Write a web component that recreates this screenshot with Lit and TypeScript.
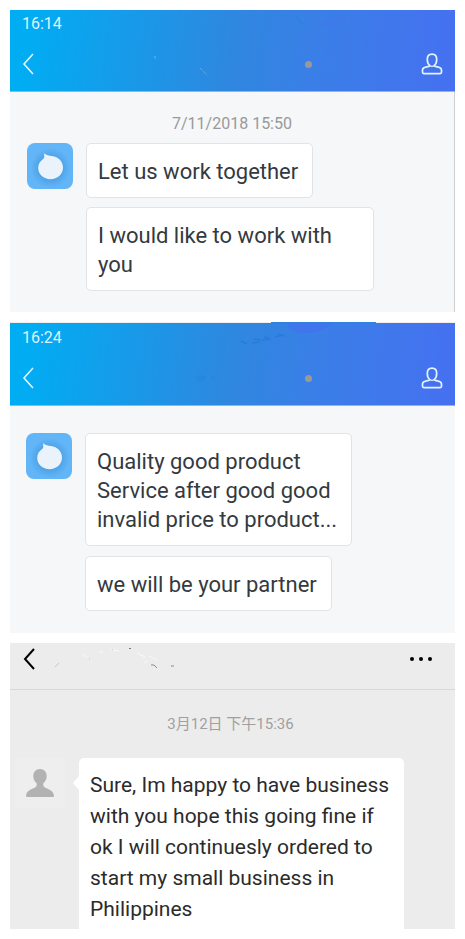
import { LitElement, html, svg, css } from "lit";
import { customElement, property } from "lit/decorators.js";

const chevron = svg`<path d="M11 1 L2 11 L11 21" fill="none" stroke="currentColor"/>`;

@customElement("chat-header")
class ChatHeader extends LitElement {
  @property() time = "";
  @property() variant = "first";

  static styles = css`
    :host { display: block; }
    .bar {
      position: relative;
      display: flex;
      flex-direction: column;
      box-sizing: border-box;
      padding: 5px 12px 6px;
      color: #fff;
      background: linear-gradient(97deg, #00adf3 4%, #2f87df 50%, #3b7ee8 70%, #4571f0 98%) padding-box;
      border-bottom: 1px solid #80b9f5;
    }
    .second { padding: 6px 12px; border-top: 1px solid #f1eeee; }
    .time { font-size: 16px; line-height: 18px; color: #dff2fd; }
    .nav { display: flex; justify-content: space-between; align-items: center; margin-top: 20px; padding-bottom: 10px; }
    button { display: flex; padding: 0; border: 0; background: none; color: #e4f4fe; cursor: pointer; }
    .back { stroke-width: 1.6; }
    .spacer { display: grid; flex: 1; grid-template-columns: 70fr 30fr; align-items: center; }
    .dot { grid-column: 2; width: 7px; height: 7px; border-radius: 50%; background: #999; }
    .marks { position: absolute; top: -1px; left: 0; width: 100%; height: 82px; pointer-events: none; }
  `;

  private marks() {
    return this.variant === "first"
      ? svg`
        <path d="M190 59 L197 66" stroke="#75b9f0" stroke-width="1" stroke-dasharray="1 1"/>
        <path d="M144 47 l2 3 M144 49 l2 -2" stroke="#52abe9" stroke-width="1"/>
        <path d="M286 8 L293 15" stroke="#2f82da" stroke-width="2"/>
        <path d="M312 13 q10 -7 24 -6 l-5 8 q-10 4 -18 1 z" fill="#4277ec" opacity=".5"/>`
      : svg`
        <path d="M261 0 H366 V2 H261 Z" fill="#2f83df"/>
        <path d="M277 1 H326 Q310 11 292 11 Q280 10 277 1 Z" fill="#4372ef" opacity=".8"/>
        <path d="M231 19 l6 3 M242 21 l8 -1 M244 17 l6 1 M252 18 l9 -1 M254 15 l5 1 M265 15 l8 -2 M268 12 l7 2" stroke="#237bd9" stroke-width="1.5" fill="none" opacity=".8"/>
        <path d="M185 56 q6 -4 10 0 q-4 4 -9 1 M201 54 l4 3" stroke="#2786dd" stroke-width="2" fill="#2786dd" opacity=".5"/>`;
  }

  render() {
    return html`
      <header class="bar ${this.variant}">
        <svg class="marks" aria-hidden="true">${this.marks()}</svg>
        <span class="time">${this.time}</span>
        <div class="nav">
          <button class="back" aria-label="Back"><svg width="12" height="22">${chevron}</svg></button>
          <span class="spacer"><i class="dot"></i></span>
          <button aria-label="Profile">
            <svg width="22" height="22" fill="none" stroke="currentColor" stroke-width="1.7">
              <path d="M11 1.2 C7.6 1.2 6.3 3.6 6.3 6.5 C6.3 9.4 7.2 11.4 8.8 12.6 C8.6 13.3 7.8 13.4 6.6 13.7 C3.2 14.3 1.5 15 1.5 17 V19.3 Q1.5 20.6 2.8 20.6 H19.2 Q20.5 20.6 20.5 19.3 V17 C20.5 15 18.8 14.3 15.4 13.7 C14.2 13.4 13.4 13.3 13.2 12.6 C14.8 11.4 15.7 9.4 15.7 6.5 C15.7 3.6 14.4 1.2 11 1.2 Z"/>
              <path d="M8.8 12.8 Q11 13.8 13.2 12.8" stroke-width="1.2"/>
            </svg>
          </button>
        </div>
      </header>
    `;
  }
}

@customElement("chat-thread")
class ChatThread extends LitElement {
  @property() date = "";
  @property({ attribute: false }) messages: string[] = [];

  static styles = css`
    :host { display: block; background: #f6f7f9; }
    .thread { padding: 22px 17px 21px 17px; }
    .undated { padding: 27px 16px 22px; }
    .date { display: block; margin-bottom: 9px; font-size: 16px; line-height: 20px; text-align: center; color: #999; }
    .row { display: flex; align-items: flex-start; gap: 13px; }
    .avatar { flex: none; border-radius: 8px; }
    .bubbles { display: flex; flex-direction: column; align-items: flex-start; gap: 9px; margin: 0; padding: 0; list-style: none; }
    .undated .bubbles { gap: 10px; }
    .bubble {
      box-sizing: border-box;
      max-width: 288px;
      padding: 13px 14px 11px 11px;
      border: 1px solid #e2e3e5;
      border-radius: 5px;
      background: #fff;
      color: #333a40;
      font-size: 22px;
      line-height: 29px;
      white-space: pre-line;
    }
  `;

  render() {
    return html`
      <div class="thread ${this.date ? "" : "undated"}">
        ${this.date ? html`<time class="date">${this.date}</time>` : null}
        <div class="row">
          <svg class="avatar" width="46" height="46" role="img" aria-label="Contact">
            <defs>
              <radialGradient id="glow"><stop offset="60%" stop-color="#4a9fe4"/><stop offset="100%" stop-color="#62b5f7"/></radialGradient>
            </defs>
            <rect width="46" height="46" fill="#62b5f7"/>
            <ellipse cx="23.5" cy="25" rx="20" ry="20" fill="url(#glow)" opacity=".8"/>
            <path d="M17.2 10.2 C19.5 12.4 22 12.7 25 13 C31.5 13.7 36 18.7 36 24.5 C36 31.3 30.3 36.2 23.5 36.2 C16.6 36.2 11.2 31.3 11.2 25 C11.2 21.2 13 18.2 16.4 15.8 C18 14.6 16.8 12.5 17.2 10.2 Z" fill="#eaf3fb"/>
          </svg>
          <ul class="bubbles">
            ${this.messages.map((m) => html`<li class="bubble">${m}</li>`)}
          </ul>
        </div>
      </div>
    `;
  }
}

@customElement("app-root")
class AppRoot extends LitElement {
  static styles = css`
    :host {
      display: flex;
      flex-direction: column;
      gap: 10px;
      padding: 10px;
      background: #fff;
      font-family: Roboto, "Noto Sans CJK SC", sans-serif;
    }
    .edge { border-right: 1px solid #cfd0d2; }
    .plain { background: #ececec; }
    .bar {
      display: flex;
      justify-content: space-between;
      align-items: center;
      padding: 5px 23px 19px 13px;
      border-bottom: 1px solid #d8d8d8;
    }
    .bar button { display: flex; padding: 0; border: 0; background: none; color: #000; }
    .back { stroke-width: 2; }
    .smudge { flex: none; margin-right: auto; margin-left: 20px; }
    .date { display: block; padding: 23px 0; margin-right: 4px; font-size: 15px; line-height: 22px; text-align: center; color: #a0a0a0; }
    .row { display: flex; align-items: flex-start; padding-left: 5px; gap: 14px; }
    .avatar { flex: none; }
    .bubble {
      position: relative;
      box-sizing: border-box;
      max-width: 325px;
      padding: 12px 11px 4px;
      border-radius: 5px 5px 0 0;
      background: #fff;
      color: #2b2b2b;
      font-size: 21px;
      line-height: 31px;
      margin: 0;
    }
    .bubble::before {
      content: "";
      position: absolute;
      top: 18px;
      left: -6px;
      border: solid transparent;
      border-width: 7px 6px 7px 0;
      border-right-color: #fff;
    }
  `;

  render() {
    return html`
      <section>
        <chat-header time="16:14"></chat-header>
        <chat-thread class="edge" date="7/11/2018 15:50"
          .messages=${["Let us work together", "I would like to work with you"]}></chat-thread>
      </section>
      <section>
        <chat-header time="16:24" variant="second"></chat-header>
        <chat-thread
          .messages=${["Quality good product\nService after good good\ninvalid price to product...", "we will be your partner"]}></chat-thread>
      </section>
      <section class="plain">
        <header class="bar">
          <button class="back" aria-label="Back"><svg width="12" height="22">${chevron}</svg></button>
          <svg class="smudge" width="130" height="22" fill="none" stroke-width="1" aria-hidden="true">
            <path d="M28 6 l4 3 M82 5 l8 4 M94 8 l8 4 M89 15 l3 -2 M44 3 l4 2 M56 2 l8 1" stroke="#fafafa"/>
            <path d="M0 19 l4 -4 M34 11 h1 M57 2 h1" stroke="#c4c4c4"/>
            <path d="M74 0.5 h2" stroke="#777"/>
            <path d="M96 17 h3 l3 3 M116 18 h3" stroke="#8a8a8a"/>
          </svg>
          <button aria-label="More">
            <svg width="22" height="6"><circle cx="2" cy="3" r="2"/><circle cx="11" cy="3" r="2"/><circle cx="20" cy="3" r="2"/></svg>
          </button>
        </header>
        <time class="date">3月12日 下午15:36</time>
        <div class="row">
          <svg class="avatar" width="50" height="50" role="img" aria-label="Contact">
            <rect width="50" height="50" fill="#eee"/>
            <path d="M25 11 C29 11 31.7 14 31.7 18.2 C31.7 21.2 30.3 23.5 28.3 25.3 V27.5 C28.3 30.8 39 30.5 39 38 Q39 39 38 39 H12 Q11 39 11 38 C11 30.5 21.7 30.8 21.7 27.5 V25.3 C19.7 23.5 18.3 21.2 18.3 18.2 C18.3 14 21 11 25 11 Z" fill="#b2b2b2"/>
          </svg>
          <p class="bubble">Sure, Im happy to have business with you hope this going fine if ok I will continuesly ordered to start my small business in Philippines</p>
        </div>
      </section>
    `;
  }
}
